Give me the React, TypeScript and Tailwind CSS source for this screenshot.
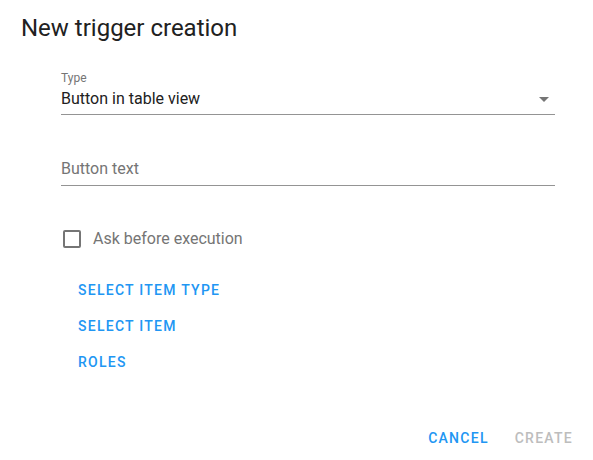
const linkBtn =
  "text-[14px] font-medium tracking-[0.09em] uppercase text-[#2196f3] leading-[36px] h-[36px] text-left";

export default function App() {
  return (
    <div
      className="w-[593px] h-[460px] bg-white relative overflow-hidden"
      style={{ fontFamily: "Roboto, 'Liberation Sans', sans-serif" }}
    >
      <h2 className="pl-[21px] pt-[13px] text-[24px] leading-[30px] text-[#212121] font-normal">
        New trigger creation
      </h2>

      <div className="pl-[61px] pr-[38px] mt-[27px]">
        {/* select field */}
        <div className="relative">
          <label className="block text-[12px] leading-[17px] text-[#757575]">Type</label>
          <div className="flex items-center justify-between h-[28px] border-b border-[#949494] pb-[3px]">
            <span className="text-[16px] text-[#212121]">Button in table view</span>
            <svg width="10" height="5" viewBox="0 0 10 5" className="mr-[6px] mt-[1px]">
              <path d="M0 0 L10 0 L5 5 Z" fill="#757575" />
            </svg>
          </div>
        </div>

        {/* text field */}
        <div className="mt-[43px] h-[28px] flex items-center border-b border-[#949494]">
          <span className="text-[16px] text-[#757575] mt-[-6px]">Button text</span>
        </div>

        {/* checkbox */}
        <label className="mt-[41px] flex items-center gap-[12px] pl-[2px]">
          <span className="w-[18px] h-[18px] border-2 border-[#757575] rounded-[2px]" />
          <span className="text-[16px] text-[#757575]">Ask before execution</span>
        </label>

        <div className="mt-[21px] flex flex-col pl-[17px]">
          <button className={linkBtn}>Select item type</button>
          <button className={linkBtn}>Select item</button>
          <button className={linkBtn}>Roles</button>
        </div>
      </div>

      <div className="absolute bottom-[4px] right-[20px] flex items-center gap-[26px]">
        <button className={linkBtn}>Cancel</button>
        <button className="text-[14px] font-medium tracking-[0.09em] uppercase text-[#bdbdbd] leading-[36px] h-[36px]">
          Create
        </button>
      </div>
    </div>
  );
}
